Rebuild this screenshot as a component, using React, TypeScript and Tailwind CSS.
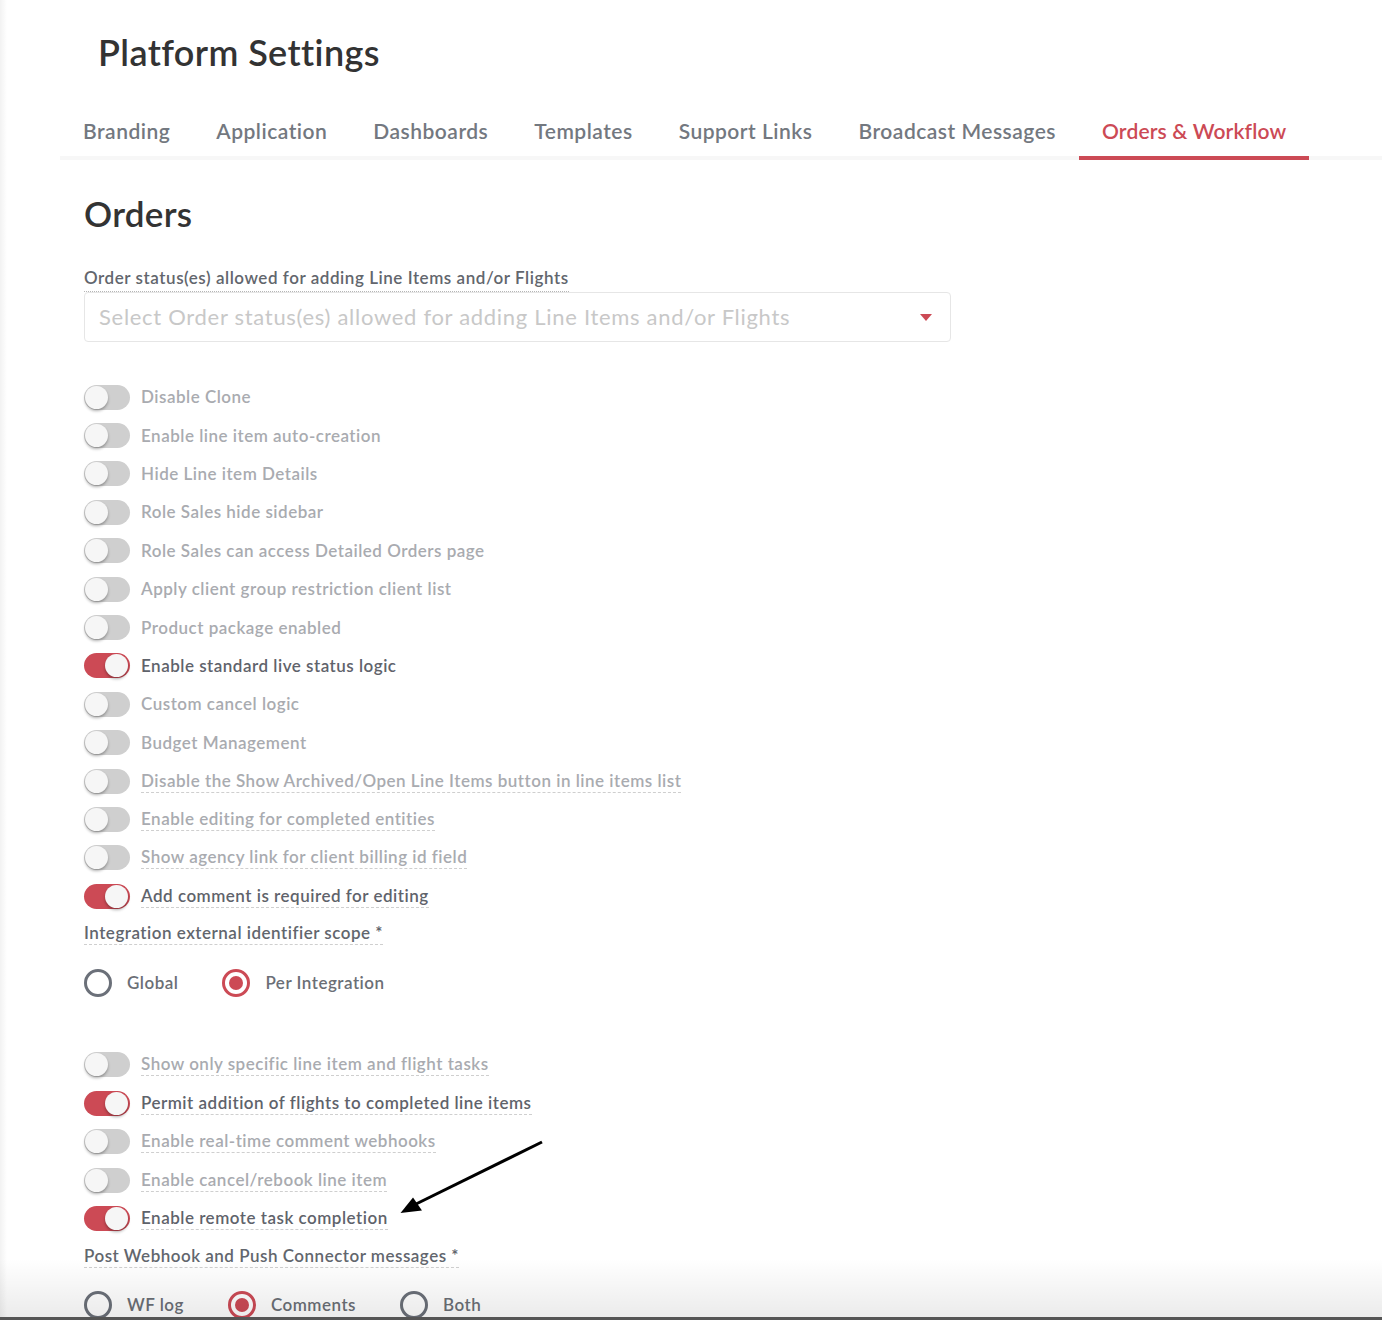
import React from "react";

const RED = "#cc4a55";

type Row = { label: string; on?: boolean; dashed?: boolean };

const rows1: Row[] = [
  { label: "Disable Clone" },
  { label: "Enable line item auto-creation" },
  { label: "Hide Line item Details" },
  { label: "Role Sales hide sidebar" },
  { label: "Role Sales can access Detailed Orders page" },
  { label: "Apply client group restriction client list" },
  { label: "Product package enabled" },
  { label: "Enable standard live status logic", on: true },
  { label: "Custom cancel logic" },
  { label: "Budget Management" },
  { label: "Disable the Show Archived/Open Line Items button in line items list", dashed: true },
  { label: "Enable editing for completed entities", dashed: true },
  { label: "Show agency link for client billing id field", dashed: true },
  { label: "Add comment is required for editing", on: true, dashed: true },
];

const rows2: Row[] = [
  { label: "Show only specific line item and flight tasks", dashed: true },
  { label: "Permit addition of flights to completed line items", on: true, dashed: true },
  { label: "Enable real-time comment webhooks", dashed: true },
  { label: "Enable cancel/rebook line item", dashed: true },
  { label: "Enable remote task completion", on: true, dashed: true },
];

function Toggle({ on }: { on?: boolean }) {
  return (
    <div
      className={
        "relative h-[25px] w-[46px] shrink-0 rounded-full " +
        (on ? "bg-[#cc4a55]" : "bg-[#cfcfcf]")
      }
    >
      <div
        className={
          "absolute top-[1px] h-[23px] w-[23px] rounded-full bg-[#f6f6f6] shadow-[0_2px_3px_rgba(0,0,0,0.3)] " +
          (on ? "right-[2px]" : "left-[1px]")
        }
      />
    </div>
  );
}

function ToggleRow({ row, h }: { row: Row; h: string }) {
  return (
    <div className={"flex items-center gap-[11px] " + h}>
      <Toggle on={row.on} />
      <span
        className={
          "text-[17px] leading-[22px] tracking-[0.5px] font-semibold " +
          (row.on ? "text-[#5f636b]" : "text-[#a9abb0]") +
          (row.dashed ? " border-b border-dashed border-[#cfcfcf]" : "")
        }
      >
        {row.label}
      </span>
    </div>
  );
}

function Radio({ checked, label }: { checked?: boolean; label: string }) {
  return (
    <div className="flex items-center gap-[15px]">
      <div
        className={
          "flex h-[28px] w-[28px] items-center justify-center rounded-full border-[3px] " +
          (checked ? "border-[#cc4a55]" : "border-[#6b7079]")
        }
      >
        {checked && <div className="h-[14px] w-[14px] rounded-full bg-[#cc4a55]" />}
      </div>
      <span className="text-[17px] leading-[22px] tracking-[0.5px] font-semibold text-[#6b6f76]">
        {label}
      </span>
    </div>
  );
}

const tabs = [
  "Branding",
  "Application",
  "Dashboards",
  "Templates",
  "Support Links",
  "Broadcast Messages",
  "Orders & Workflow",
];

export default function App() {
  return (
    <div
      className="relative h-[1320px] overflow-hidden bg-white"
      style={{ fontFamily: "Lato, 'Open Sans', sans-serif" }}
    >
      <div className="pl-[60px]">
        <h1 className="ml-[38px] pt-[31px] text-[36px] leading-[42px] tracking-[0.4px] font-semibold text-[#333333]">
          Platform Settings
        </h1>
        <nav className="mt-[44px] flex border-b-4 border-[#f7f7f7]">
          {tabs.map((t) => {
            const active = t === "Orders & Workflow";
            return (
              <div
                key={t}
                className={
                  "-mb-[4px] px-[23px] pb-[11px] text-[21px] leading-[28px] font-semibold border-b-4 " +
                  (active
                    ? "tracking-[0.15px] border-[#cc4a55] text-[#cc4a55]"
                    : "tracking-[0.5px] border-transparent text-[#737880]")
                }
              >
                {t}
              </div>
            );
          })}
        </nav>

        <div className="ml-[24px]">
          <h2 className="mt-[32px] text-[35px] leading-[42px] tracking-[0.3px] font-semibold text-[#333333]">
            Orders
          </h2>

          <div className="mt-[33px] flex">
            <span className="border-b border-dotted border-[#b5b5b5] pb-[2px] text-[17px] leading-[22px] tracking-[0.55px] font-semibold text-[#62666d]">
              Order status(es) allowed for adding Line Items and/or Flights
            </span>
          </div>
          <div className="flex h-[50px] w-[867px] items-center justify-between rounded-[4px] border border-[#e6e6e6] pl-[14px] pr-[18px]">
            <span className="text-[22px] leading-[28px] tracking-[0.7px] font-normal text-[#c8c8c8]">
              Select Order status(es) allowed for adding Line Items and/or Flights
            </span>
            <svg width="12" height="7" viewBox="0 0 12 7">
              <path d="M0 0 L12 0 L6 7 Z" fill={RED} />
            </svg>
          </div>

          <div className="mt-[36px] flex flex-col">
            {rows1.map((r) => (
              <ToggleRow key={r.label} row={r} h="h-[38.4px]" />
            ))}
          </div>

          <div className="mt-[7px] flex">
            <span className="border-b border-dashed border-[#cfcfcf] text-[17px] leading-[22px] tracking-[0.5px] font-semibold text-[#62666d]">
              Integration external identifier scope *
            </span>
          </div>
          <div className="mt-[24px] flex gap-[44px]">
            <Radio label="Global" />
            <Radio label="Per Integration" checked />
          </div>

          <div className="mt-[48px] flex flex-col">
            {rows2.map((r) => (
              <ToggleRow key={r.label} row={r} h="h-[38.5px]" />
            ))}
          </div>

          <div className="mt-[7px] flex">
            <span className="border-b border-dashed border-[#cfcfcf] text-[17px] leading-[22px] tracking-[0.5px] font-semibold text-[#62666d]">
              Post Webhook and Push Connector messages *
            </span>
          </div>
          <div className="mt-[23px] flex gap-[44px]">
            <Radio label="WF log" />
            <Radio label="Comments" checked />
            <Radio label="Both" />
          </div>
        </div>
      </div>

      {/* annotation arrow */}
      <svg className="pointer-events-none absolute left-0 top-0" width="1382" height="1320">
        <line x1="542" y1="1142" x2="412" y2="1206" stroke="#000" strokeWidth="3" />
        <path d="M400.5 1213 L413 1197.5 L422 1210.5 Z" fill="#000" />
      </svg>

      {/* window edge shading */}
      <div className="pointer-events-none absolute left-0 top-0 h-full w-[7px] bg-gradient-to-r from-[rgba(0,0,0,0.05)] to-transparent" />
      <div className="pointer-events-none absolute bottom-[3px] left-0 h-[58px] w-full bg-gradient-to-b from-transparent to-[rgba(0,0,0,0.08)]" />
      <div className="pointer-events-none absolute bottom-0 left-0 h-[3px] w-full bg-[#555555]" />
    </div>
  );
}
